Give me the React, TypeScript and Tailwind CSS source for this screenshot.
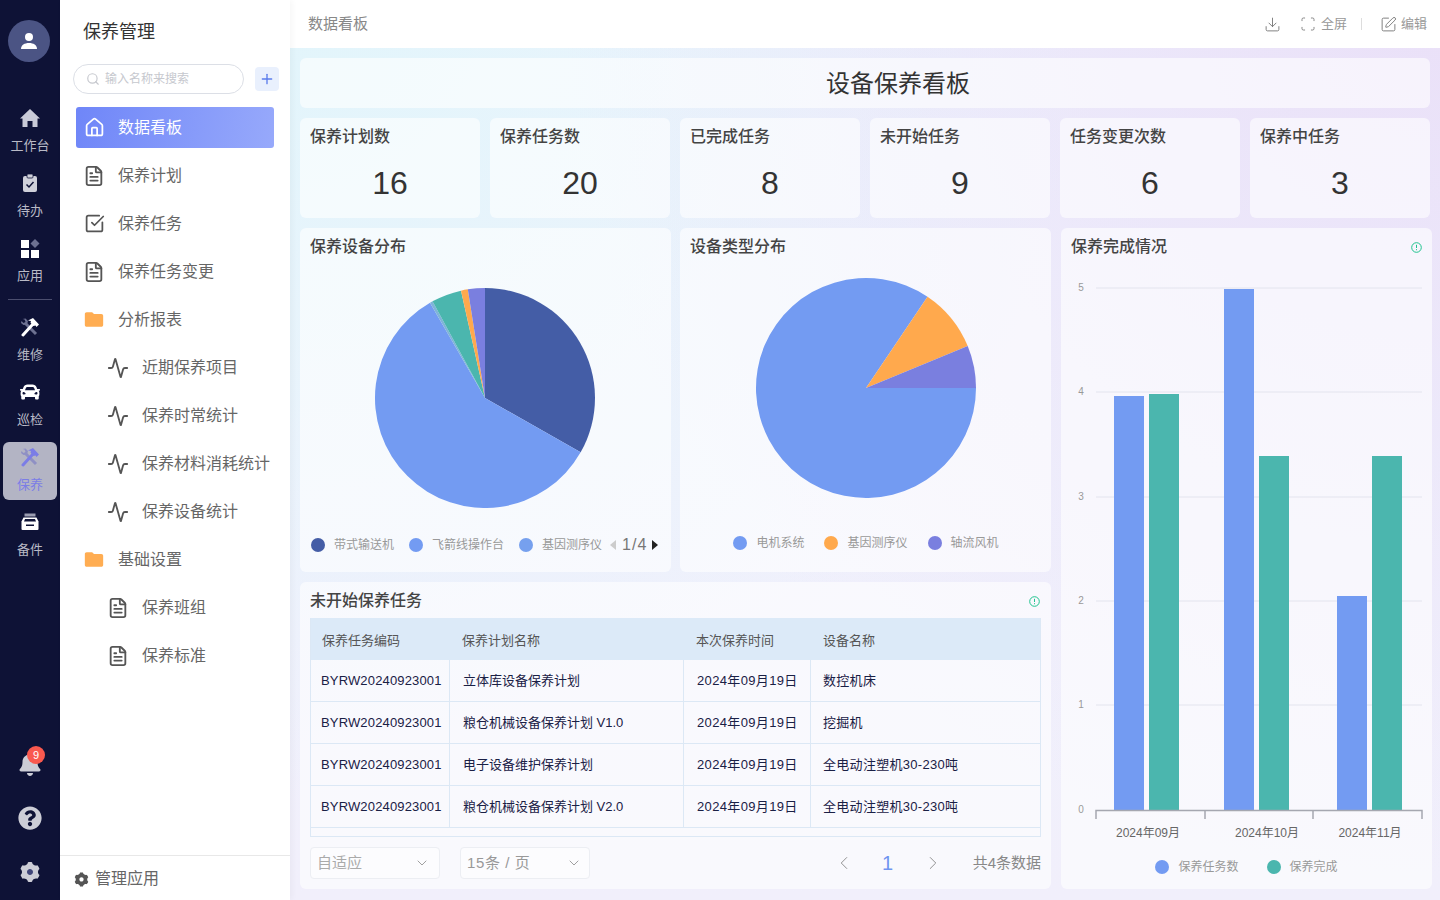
import React from "react";
import { Activity, ChevronDown, ChevronLeft, ChevronRight, Download, FileText, House, Plus, Scan, Search, SquareCheckBig, SquarePen } from "lucide-react";
import { FaBell, FaCar, FaQuestionCircle } from "react-icons/fa";
import { MdFolder } from "react-icons/md";
import { RiSettings3Fill } from "react-icons/ri";

const HomeIcon = () => (
  <svg width="20" height="20" viewBox="0 0 20 20" fill="#c9cad7">
    <path d="M10 1l10 9.500h-2.500V19H12.500v-6h-5v6H2.500v-8.500H0z" />
  </svg>
);

const ClipboardIcon = () => (
  <svg width="20" height="20" viewBox="0 0 20 20">
    <rect x="3" y="3" width="14" height="16" rx="2" fill="#cfd0da" />
    <rect x="7" y="1" width="6" height="4" rx="1" fill="#cfd0da" stroke="#0e1236" strokeWidth="0.800" />
    <path d="M6.500 11.500l2.500 2.500 4.500-5" fill="none" stroke="#0e1236" strokeWidth="1.500" />
  </svg>
);

const AppsIcon = () => (
  <svg width="20" height="20" viewBox="0 0 20 20">
    <rect x="1" y="2" width="8" height="8" fill="#fff" />
    <rect x="1" y="12" width="8" height="8" fill="#fff" />
    <rect x="11" y="12" width="8" height="8" fill="#fff" />
    <path d="M15 1l4.500 4.500L15 10l-4.500-4.500z" fill="#6d7191" />
  </svg>
);

const ToolsIcon = ({ main, back }: { main: string; back: string }) => (
  <svg width="20" height="20" viewBox="0 0 20 20" fill="none">
    <path d="M5 6l11 11" stroke={back} strokeWidth="3" />
    <path d="M1.500 4l2 2 2-1-1-2.500-2-.5 3-.5 2.500 2.500-1 3.500-3.500.5L1 6z" fill={back} />
    <path d="M3 18L13 7" stroke={main} strokeWidth="3" strokeLinecap="round" />
    <path d="M8 3.500L13 1l6 6.500-2.500 2.500-1-1.500-2 .5-3-3.500.5-1.500z" fill={main} />
  </svg>
);

const TrayIcon = () => (
  <svg width="20" height="20" viewBox="0 0 20 20">
    <rect x="4.500" y="1.500" width="11" height="3" fill="#9a9cb0" />
    <path d="M3.500 5.500h13l2 4V17a1 1 0 0 1-1 1h-15a1 1 0 0 1-1-1V9.500z" fill="#fff" />
    <path d="M5 7h10l1 2.500H4z" fill="#0e1236" />
    <rect x="6" y="12.500" width="8" height="1.500" fill="#0e1236" />
  </svg>
);

const GearIcon = ({ size, className, dot }: { size: number; className?: string; dot: string }) => (
  <div className={`relative flex items-center justify-center ${className ?? ""}`}>
    <div className="absolute h-2 w-2 rounded-full" style={{ background: dot }} />
    <RiSettings3Fill size={size} className="relative" />
  </div>
);

const railTop = [
  { label: "工作台", icon: <HomeIcon /> },
  { label: "待办", icon: <ClipboardIcon /> },
  { label: "应用", icon: <AppsIcon /> },
];

const railBottom = [
  { label: "维修", icon: <ToolsIcon main="#fff" back="#6d7191" /> },
  { label: "巡检", icon: <FaCar size={20} /> },
  { label: "保养", icon: <ToolsIcon main="#7b7de6" back="#8f90c4" />, active: true },
  { label: "备件", icon: <TrayIcon /> },
];

const RailItem = ({ label, icon, active }: { label: string; icon: React.ReactNode; active?: boolean }) => (
  <div className={`mx-[3px] mb-[7px] flex h-[58px] flex-col items-center rounded-md pt-[5px] ${active ? "bg-[#b3b4c4] text-[#7b7de6]" : "text-[#b9bac6]"}`}>
    <div className={`flex h-5 items-center ${active ? "" : "text-white"}`}>{icon}</div>
    <div className="mt-2 text-[13px] leading-[20px]">{label}</div>
  </div>
);

const Rail = () => (
  <div className="flex h-full w-[60px] shrink-0 flex-col bg-[#0e1236]">
    <div className="mx-2 mt-5 flex h-[42px] w-[42px] items-center justify-center rounded-full bg-[#4b5484] text-white">
      <svg width="18" height="18" viewBox="0 0 18 18" fill="currentColor">
        <circle cx="9" cy="5" r="4" />
        <path d="M1 17c0-4 3.500-6 8-6s8 2 8 6z" />
      </svg>
    </div>
    <div className="mt-[41px]">
      {railTop.map((r) => (
        <RailItem key={r.label} {...r} />
      ))}
    </div>
    <div className="mx-2 mt-px mb-[12px] h-px bg-[#4b4e6e]" />
    <div>
      {railBottom.map((r) => (
        <RailItem key={r.label} {...r} />
      ))}
    </div>
    <div className="mt-auto mb-[16px] flex flex-col items-center gap-[30px] text-[#cccdd6]">
      <div className="relative">
        <FaBell size={24} />
        <div className="absolute -top-[6px] left-[9px] flex h-[18px] w-[18px] items-center justify-center rounded-full bg-[#f9594f] text-[11px] text-white">9</div>
      </div>
      <FaQuestionCircle size={24} />
      <GearIcon size={24} dot="#3f4578" />
    </div>
  </div>
);

const menu = [
  { label: "数据看板", icon: <House size={21} strokeWidth={2} />, active: true },
  { label: "保养计划", icon: <FileText size={22} strokeWidth={2} /> },
  { label: "保养任务", icon: <SquareCheckBig size={21} strokeWidth={2} /> },
  { label: "保养任务变更", icon: <FileText size={22} strokeWidth={2} /> },
  { label: "分析报表", icon: <MdFolder size={23} className="text-[#ffad52]" /> },
  { label: "近期保养项目", icon: <Activity size={22} strokeWidth={2} />, sub: true },
  { label: "保养时常统计", icon: <Activity size={22} strokeWidth={2} />, sub: true },
  { label: "保养材料消耗统计", icon: <Activity size={22} strokeWidth={2} />, sub: true },
  { label: "保养设备统计", icon: <Activity size={22} strokeWidth={2} />, sub: true },
  { label: "基础设置", icon: <MdFolder size={23} className="text-[#ffad52]" /> },
  { label: "保养班组", icon: <FileText size={22} strokeWidth={2} />, sub: true },
  { label: "保养标准", icon: <FileText size={22} strokeWidth={2} />, sub: true },
];

const Sidebar = () => (
  <div className="relative z-10 flex h-full w-[230px] shrink-0 flex-col bg-white shadow-[2px_0_6px_rgba(0,0,0,0.04)]">
    <div className="mt-5 ml-[23px] text-[18px] leading-[24px] text-[#333]">保养管理</div>
    <div className="mt-5 ml-[13px] flex items-center">
      <div className="flex h-[30px] w-[171px] items-center rounded-full border border-[#dcdfe6] pl-3 text-[12px] text-[#c6c8ce]">
        <Search size={14} className="mr-[5px]" />
        输入名称来搜索
      </div>
      <div className="ml-[11px] flex h-6 w-6 items-center justify-center rounded bg-[#e9f0fd] text-[#5b7cec]">
        <Plus size={16} />
      </div>
    </div>
    <div className="mt-[13px] ml-4 w-[198px]">
      {menu.map((m) => (
        <div
          key={m.label}
          className={`mb-[7px] flex h-[41px] items-center rounded-[3px] text-[16px] ${m.active ? "bg-[linear-gradient(100deg,#6f86f8,#97a9fb)] text-white" : "text-[#666]"} ${m.sub ? "pl-[31px]" : "pl-[7px]"}`}
        >
          <div className={`flex w-[22px] justify-center ${m.active ? "" : "text-[#555]"}`}>{m.icon}</div>
          <div className="ml-[13px] whitespace-nowrap">{m.label}</div>
        </div>
      ))}
    </div>
    <div className="mt-auto flex h-[45px] items-center border-t border-[#e8e8e8] pt-[2px] pl-[13px] text-[16px] text-[#666]">
      <GearIcon size={17} dot="#fff" className="mr-[5px] text-[#555]" />
      管理应用
    </div>
  </div>
);

const Card = ({ className, children }: { className?: string; children: React.ReactNode }) => (
  <div className={`rounded-[6px] bg-white/60 ${className ?? ""}`}>{children}</div>
);

const kpis = [
  ["保养计划数", "16"],
  ["保养任务数", "20"],
  ["已完成任务", "8"],
  ["未开始任务", "9"],
  ["任务变更次数", "6"],
  ["保养中任务", "3"],
];

const CardTitle = ({ text }: { text: string }) => (
  <div className="text-[16px] leading-[20px] font-medium text-[#444]">{text}</div>
);

const InfoDot = () => (
  <svg width="11" height="11" viewBox="0 0 11 11" fill="none" stroke="#1fc38e" strokeWidth="1">
    <circle cx="5.500" cy="5.500" r="4.800" />
    <path d="M5.500 2.800v3.200M5.500 7.200v1" />
  </svg>
);

// angles in degrees, clockwise from 12 o'clock
const slice = (cx: number, cy: number, r: number, a0: number, a1: number) => {
  const p = (a: number) => {
    const t = (a * Math.PI) / 180;
    return `${(cx + r * Math.sin(t)).toFixed(2)} ${(cy - r * Math.cos(t)).toFixed(2)}`;
  };
  return `M${cx} ${cy}L${p(a0)}A${r} ${r} 0 ${a1 - a0 > 180 ? 1 : 0} 1 ${p(a1)}Z`;
};

const Pie = ({ cx, cy, parts }: { cx: number; cy: number; parts: [number, number, string][] }) => (
  <svg width="371" height="250" viewBox="0 0 371 250" className="block">
    {parts.map(([a, b, c]) => (
      <path key={c + a} d={slice(cx, cy, 110, a, b)} fill={c} />
    ))}
  </svg>
);

const LegendItem = ({ color, text, className }: { color: string; text: string; className?: string }) => (
  <div className={`flex items-center text-[12px] text-[#999] ${className ?? ""}`}>
    <span className="mr-[9px] h-[14px] w-[14px] rounded-full" style={{ background: color }} />
    {text}
  </div>
);

const rows = [
  ["BYRW20240923001", "立体库设备保养计划", "2024年09月19日", "数控机床"],
  ["BYRW20240923001", "粮仓机械设备保养计划 V1.0", "2024年09月19日", "挖掘机"],
  ["BYRW20240923001", "电子设备维护保养计划", "2024年09月19日", "全电动注塑机30-230吨"],
  ["BYRW20240923001", "粮仓机械设备保养计划 V2.0", "2024年09月19日", "全电动注塑机30-230吨"],
];

const TaskTable = () => (
  <Card className="h-[307px] px-[10px] pt-[9px]">
    <div className="flex h-[20px] items-center justify-between pr-[1px]">
      <CardTitle text="未开始保养任务" />
      <InfoDot />
    </div>
    <div className="mt-[7px] w-[731px] border-x border-b border-[#dce8f5] pb-[8px] text-[13px]">
      <div className="grid h-[42px] grid-cols-[139px_234px_127px_229px] items-center bg-[#dceaf8] pt-[3px] text-[#555]">
        <div className="pl-[11px]">保养任务编码</div>
        <div className="pl-[12px]">保养计划名称</div>
        <div className="pl-[12px]">本次保养时间</div>
        <div className="pl-[12px]">设备名称</div>
      </div>
      {rows.map((r, i) => (
        <div key={i} className="grid h-[42px] grid-cols-[139px_234px_127px_229px] border-b border-[#dce8f5] text-[#1a2045]">
          <div className="flex items-center border-r border-[#dce8f5] pl-[10px] tracking-[0.15px]">{r[0]}</div>
          <div className="flex items-center border-r border-[#dce8f5] pl-[13px]">{r[1]}</div>
          <div className="flex items-center border-r border-[#dce8f5] pl-[13px] tracking-[0.35px]">{r[2]}</div>
          <div className="flex items-center pl-[12px] tracking-[0.3px]">{r[3]}</div>
        </div>
      ))}
    </div>
    <div className="mt-[10px] flex items-center text-[15px] text-[#aaa]">
      <div className="flex h-[32px] w-[130px] items-center justify-between rounded border border-[#eceef3] bg-white/50 pr-[9px] pl-[6px]">
        自适应
        <ChevronDown size={16} strokeWidth={1.200} className="text-[#888]" />
      </div>
      <div className="ml-[20px] flex h-[32px] w-[130px] items-center justify-between rounded border border-[#eceef3] bg-white/50 pr-[7px] pl-[6px] text-[#999]">
        <span className="tracking-[0.6px] whitespace-pre">15条 / 页</span>
        <ChevronDown size={16} strokeWidth={1.200} className="text-[#888]" />
      </div>
      <ChevronLeft size={22} strokeWidth={1} className="ml-[243px] text-[#888]" />
      <div className="ml-[27px] text-[20px] text-[#6f95f0]">1</div>
      <ChevronRight size={22} strokeWidth={1} className="ml-[29px] text-[#888]" />
      <div className="ml-auto text-[15px] whitespace-nowrap text-[#888]">共4条数据</div>
    </div>
  </Card>
);

const gridYs = [
  [5, 288],
  [4, 392],
  [3, 497],
  [2, 601],
  [1, 705],
];

// x, y are page coordinates, the viewBox starts at the svg's place on the page
const bars = [
  [1114, 396, "#739bf2"],
  [1149, 394, "#4bb6ae"],
  [1224, 289, "#739bf2"],
  [1259, 456, "#4bb6ae"],
  [1337, 596, "#739bf2"],
  [1372, 456, "#4bb6ae"],
] as const;

const BarChart = () => (
  <svg width="371" height="576" viewBox="1061 268 371 576" className="block">
    {gridYs.map(([v, y]) => (
      <g key={v}>
        <line x1="1096" x2="1422" y1={y} y2={y} stroke="#e3e4ee" />
        <text x="1081" y={y + 3} fontSize="10" fill="#999" textAnchor="middle">{v}</text>
      </g>
    ))}
    <text x="1081" y="813" fontSize="10" fill="#999" textAnchor="middle">0</text>
    {bars.map(([x, y, c]) => (
      <rect key={x} x={x} y={y} width="30" height={810 - y} fill={c} />
    ))}
    <path d="M1096 819V810.500H1422V819M1205 810.500V819M1313 810.500V819" fill="none" stroke="#a5a7b0" strokeWidth="1.500" />
    <text x="1148" y="837" fontSize="12" fill="#666" textAnchor="middle">2024年09月</text>
    <text x="1267" y="837" fontSize="12" fill="#666" textAnchor="middle">2024年10月</text>
    <text x="1370" y="837" fontSize="12" fill="#666" textAnchor="middle">2024年11月</text>
  </svg>
);

const Dashboard = () => (
  <div className="flex min-w-0 flex-1 flex-col bg-[radial-gradient(circle_at_100%_0%,#eae0f8_0%,transparent_60%),radial-gradient(circle_at_0%_0%,#e2f5fb_0%,transparent_55%),linear-gradient(180deg,#eef3fd,#f1effb)]">
    <div className="flex h-12 shrink-0 items-center justify-between bg-white pr-[13px] pl-[18px]">
      <div className="text-[15px] text-[#888]">数据看板</div>
      <div className="flex items-center text-[13px] text-[#999]">
        <Download size={17} strokeWidth={1.300} className="text-[#777]" />
        <Scan size={16} strokeWidth={1.300} className="ml-[19px] text-[#777]" />
        <span className="ml-[5px]">全屏</span>
        <div className="mr-[18px] ml-[14px] h-3 w-px bg-[#ddd]" />
        <SquarePen size={17} strokeWidth={1.300} className="text-[#777]" />
        <span className="ml-[4px]">编辑</span>
      </div>
    </div>
    <div className="flex flex-col gap-[10px] px-[10px] pt-[10px]">
      <Card className="flex h-[50px] w-[1130px] items-center justify-center pt-[2px] pl-[66px] text-[24px] text-[#333]">设备保养看板</Card>
      <div className="grid w-[1130px] grid-cols-6 gap-[10px]">
        {kpis.map(([t, v]) => (
          <Card key={t} className="h-[100px] px-[10px] pt-[9px]">
            <CardTitle text={t} />
            <div className="mt-[16px] text-center text-[32px] leading-[40px] text-[#333]">{v}</div>
          </Card>
        ))}
      </div>
      <div className="flex gap-[10px]">
        <div className="flex w-[751px] shrink-0 flex-col gap-[10px]">
          <div className="flex gap-[9px]">
            <Card className="h-[344px] w-[371px] pt-[9px]">
              <div className="px-[10px]"><CardTitle text="保养设备分布" /></div>
              <div className="mt-[1px]">
                <Pie
                  cx={185}
                  cy={140}
                  parts={[
                    [0, 119.6, "#445da6"],
                    [119.6, 330, "#739bf2"],
                    [330, 331.5, "#7fb4d8"],
                    [331.5, 347.4, "#4bb6ae"],
                    [347.4, 351, "#ffa94d"],
                    [351, 360, "#7a7fdf"],
                  ]}
                />
              </div>
              <div className="mt-[25px] flex items-center pl-[11px]">
                <LegendItem color="#445da6" text="带式输送机" />
                <LegendItem color="#739bf2" text="飞箭线操作台" className="ml-[15px]" />
                <LegendItem color="#76a0ee" text="基因测序仪" className="ml-[15px]" />
                <span className="ml-[8px] h-0 w-0 border-y-[5px] border-r-[6px] border-y-transparent border-r-[#ccc]" />
                <span className="ml-[6px] text-[16px] font-light tracking-[1px] text-[#777]">1/4</span>
                <span className="ml-[5px] h-0 w-0 border-y-[5px] border-l-[6px] border-y-transparent border-l-[#222]" />
              </div>
            </Card>
            <Card className="h-[344px] w-[371px] pt-[9px]">
              <div className="px-[10px]"><CardTitle text="设备类型分布" /></div>
              <div className="mt-[1px]">
                <Pie
                  cx={186}
                  cy={130}
                  parts={[
                    [90, 394, "#739bf2"],
                    [34, 67.6, "#ffa94d"],
                    [67.6, 90, "#7a7fdf"],
                  ]}
                />
              </div>
              <div className="mt-[26px] flex items-center justify-center gap-[20px] pl-[1px]">
                <LegendItem color="#739bf2" text="电机系统" />
                <LegendItem color="#ffa94d" text="基因测序仪" />
                <LegendItem color="#7a7fdf" text="轴流风机" />
              </div>
            </Card>
          </div>
          <TaskTable />
        </div>
        <Card className="h-[661px] w-[371px] shrink-0 pt-[9px]">
          <div className="flex items-center justify-between px-[10px]">
            <CardTitle text="保养完成情况" />
            <InfoDot />
          </div>
          <div className="mt-[11px]"><BarChart /></div>
          <div className="mt-[14px] flex items-center justify-center gap-[28px]">
            <LegendItem color="#739bf2" text="保养任务数" />
            <LegendItem color="#4bb6ae" text="保养完成" />
          </div>
        </Card>
      </div>
    </div>
  </div>
);

const App = () => (
  <div className="flex h-screen w-screen overflow-hidden font-['Liberation_Sans','Noto_Sans_CJK_SC',sans-serif]">
    <Rail />
    <Sidebar />
    <Dashboard />
  </div>
);

export default App;
